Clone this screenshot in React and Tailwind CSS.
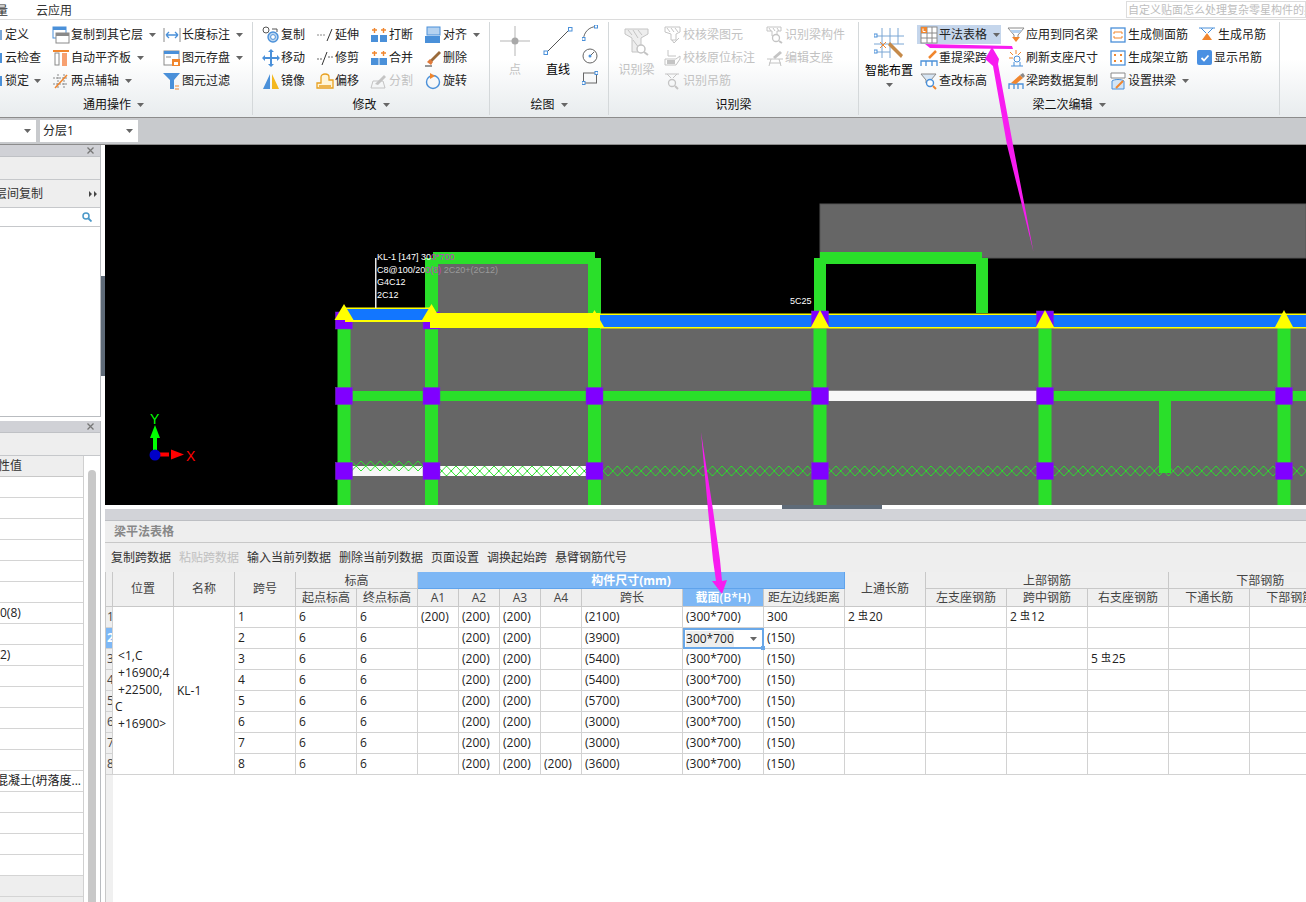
import React from "react";

const B = "#4a90d9";
const O = "#f0862e";
const G = "#8a8a8a";
const L = "#c4c4c4";

const icons = {
  copyLayer: <><rect x="1" y="1" width="13" height="11" fill="#fff" stroke={B} /><rect x="1" y="1" width="13" height="3" fill={B} /><rect x="4" y="7" width="13" height="10" fill="#fff" stroke={G} /><rect x="4" y="7" width="13" height="3" fill={G} /></>,
  autoAlign: <><rect x="1" y="1" width="16" height="2" fill={O} /><rect x="3" y="4" width="4" height="12" fill="#fff" stroke={G} /><rect x="10" y="4" width="5" height="13" fill="#f7a070" /></>,
  twoPoint: <><path d="M1 6h15M1 12h15M6 2v15M12 2v15" stroke={G} strokeDasharray="2 1" fill="none" /><path d="M3 16L15 3" stroke={O} strokeWidth="1.5" /></>,
  dimension: <><path d="M1 2v14M17 2v14" stroke={G} /><path d="M3 9h12M3 9l3-3M3 9l3 3M15 9l-3-3M15 9l-3 3" stroke={B} strokeWidth="1.3" fill="none" /></>,
  saveEl: <><rect x="1" y="2" width="15" height="14" fill="#fff" stroke={G} /><rect x="1" y="2" width="15" height="3" fill={B} /><rect x="3" y="7" width="5" height="2" fill={L} /><rect x="9" y="10" width="8" height="7" fill={O} /><rect x="11" y="13" width="4" height="3" fill="#fff" /></>,
  filter: <><path d="M0 1h17l-6 7v9H7V8z" fill={B} /><path d="M12 14h4M12 17h4" stroke={O} /></>,
  copy: <><circle cx="4" cy="4" r="3" fill="#fff" stroke="#555" /><circle cx="11" cy="11" r="5" fill="#bcd6f0" stroke={B} strokeWidth="1.4" /><circle cx="11" cy="11" r="2.4" fill="#fff" stroke={B} /><path d="M10 3h5v3" stroke="#555" fill="none" /></>,
  extend: <><path d="M1 9h9" stroke={G} strokeDasharray="2 1" fill="none" /><path d="M11 15L16 3" stroke="#333" /></>,
  breakEl: <><rect x="1" y="9" width="7" height="7" fill={B} /><rect x="10" y="9" width="7" height="7" fill={B} /><path d="M2 4h5M4.5 2v5M11 4h5M13.5 2v5" stroke={O} strokeWidth="1.4" /></>,
  align: <><rect x="3" y="1" width="13" height="8" fill="#b5d2f0" stroke={B} /><rect x="1" y="10" width="15" height="7" fill={B} /></>,
  move: <path d="M9 0l3 3h-2v5h5V6l3 3-3 3v-2h-5v5h2l-3 3-3-3h2v-5H3v2L0 9l3-3v2h5V3H6z" fill={B} />,
  trim: <><path d="M1 10h5M12 8h5" stroke="#666" strokeDasharray="2 1" /><path d="M6 16L11 3" stroke="#333" /></>,
  merge: <><rect x="1" y="9" width="16" height="7" fill={B} /><path d="M9 9v7" stroke="#fff" /><path d="M2 4h5M4.5 2v5M11 4h5M13.5 2v5" stroke={O} strokeWidth="1.4" /></>,
  del: <><path d="M6 11L15 2l2 2-9 9z" fill="#9a6a3a" /><path d="M3 13l3-3 3 3-2 3z" fill="#e07a3a" /><path d="M1 17h7" stroke="#333" /></>,
  mirror: <><path d="M8 2v15H1z" fill={B} /><path d="M10 2v15h7z" fill="#f4b81e" /></>,
  offset: <path d="M1 16v-5h4V5c0-4 8-4 8 0v3h4v8zM3 14h12" fill="#fff5d8" stroke="#e8a020" strokeWidth="1.3" />,
  split: <><path d="M1 16h14l-2-7H3z" fill="none" stroke={L} /><path d="M5 12L14 3l2 2-8 8z" fill={L} /></>,
  rotate: <><circle cx="9" cy="10" r="6.5" fill="none" stroke={B} strokeWidth="1.4" /><path d="M6 1l5 3-5 3z" fill={O} /></>,
  genSide: <><rect x="2" y="2" width="14" height="14" fill="#fff" stroke={B} strokeWidth="1.3" /><path d="M5 6h8M5 12h8M5 6v2M13 6v2M5 12v-2M13 12v-2" stroke={O} fill="none" /></>,
  genStand: <><rect x="2" y="2" width="14" height="14" fill="#fff" stroke={B} strokeWidth="1.3" /><rect x="5" y="5" width="2" height="2" fill={O} /><rect x="11" y="5" width="2" height="2" fill={O} /><rect x="5" y="11" width="2" height="2" fill={O} /><rect x="11" y="11" width="2" height="2" fill={O} /></>,
  hang: <><path d="M1 2h16M3 2l5 5M15 2l-5 5" stroke={B} fill="none" /><path d="M9 7l5 7H4z" fill={O} /></>,
  table: <><rect x="1" y="1" width="16" height="16" fill="#fff" stroke={G} /><path d="M1 7h16M1 12h16M7 1v16M12 1v16" stroke={G} /><rect x="1" y="1" width="6" height="6" fill={O} /><path d="M3 2.5v3h2.5" stroke="#fff" fill="none" /></>,
  applySame: <><path d="M1 2h16l-6 7v3H7V9z" fill="#fff" stroke={G} /><path d="M3 4h12l-3 3H6z" fill="#b5d2f0" /><path d="M5 11h8l-4 5z" fill={O} /></>,
  refresh: <><path d="M9 1v4M2 9h4M3 3l3 3M14 3l-3 3" stroke={O} /><circle cx="10" cy="10" r="3" fill="#fff" stroke={B} /><path d="M4 17h12M7 13v4M13 13v4" stroke={B} /></>,
  retrieve: <><path d="M1 17v-5h16v5M1 12h16M6 12v5M12 12v5" stroke={B} fill="none" strokeWidth="1.3" /><path d="M9 9l7-7" stroke={O} strokeWidth="2.5" /></>,
  checkElev: <><path d="M1 2h15l-5 6v3H6V8z" fill="#d8e6f4" stroke={G} /><circle cx="10" cy="11" r="3.5" fill="#fff" stroke={B} strokeWidth="1.4" /><path d="M13 14l3 3" stroke={O} strokeWidth="2" /></>,
  spanCopy: <><path d="M2 17v-5h14v5M7 12v5M11 12v5" stroke={B} fill="none" strokeWidth="1.3" /><path d="M4 11L13 3l3 3-7 6z" fill={O} /><path d="M13 3l3-2 2 3-2 2z" fill={G} /></>,
  arch: <><path d="M2 1h14v5H2z" fill="#fff" stroke={G} /><path d="M3 17V9c2-2 10-2 12 0v8z" fill="#d3e5f6" stroke={B} /><path d="M7 16L14 9" stroke={O} strokeWidth="2" /></>,
  checkBeam: <><path d="M1 1h15v5l-4 2v6H7V8L1 6z" fill="none" stroke={L} /><path d="M3 2l3 4M7 2l3 4M11 2l3 4" stroke={L} /><path d="M8 14l2 3 5-5" stroke={L} fill="none" /></>,
  checkOrig: <><path d="M4 1v6h8M1 10h11l4-3v3l-4 6H1z" fill="none" stroke={L} /><path d="M3 11h8v4H3z" fill={L} /></>,
  hangGray: <><path d="M1 2h14M3 2l4 4M13 2l-4 4" stroke={L} fill="none" /><circle cx="8" cy="11" r="3.5" fill="none" stroke={L} strokeWidth="1.3" /><path d="M11 14l3 3" stroke={L} strokeWidth="2" /></>,
  beamComp: <><path d="M1 1h14v4h-4v5H6V5H1z" fill="none" stroke={L} /><path d="M3 2l2 3M7 2l2 3M11 2l2 3" stroke={L} /><circle cx="10" cy="12" r="3.5" fill="#fff" stroke={L} strokeWidth="1.3" /><path d="M13 15l3 2" stroke={L} strokeWidth="2" /></>,
  editSupport: <><path d="M1 10h16M3 14h12M5 10l-2 7M13 10l2 7" stroke={L} fill="none" /><path d="M7 8l7-6 2 2-7 6z" fill={L} /></>,
};

function Ico({ name, size = 18 }) {
  return (
    <svg viewBox="0 0 18 18" className="shrink-0" width={size} height={size}>
      {icons[name]}
    </svg>
  );
}

function Caret({ className = "" }) {
  return (
    <svg viewBox="0 0 7 4" className={`w-[7px] h-[4px] shrink-0 ${className}`}>
      <path d="M0 0h7L3.5 4z" fill="#666" />
    </svg>
  );
}

function Item({ icon, label, caret, off, active }) {
  return (
    <div className="h-[23px] flex items-center">
      <div className={`flex items-center gap-[1px] h-[19px] ${active ? "bg-[#c5d6ec] w-[84px] pl-[3px] -ml-[3px]" : ""}`}>
        <Ico name={icon} />
        <span className={`whitespace-nowrap ${off ? "text-[#c2c2c2]" : "text-[#222]"}`}>{label}</span>
        {caret && <Caret className="ml-[5px]" />}
      </div>
    </div>
  );
}

function Group({ width, label, caret, start, children }) {
  return (
    <>
      <section className="flex flex-col shrink-0" style={{ width }}>
        <div className="flex h-[72px] pt-[3px] box-border">{children}</div>
        <div className={`flex h-[24px] pt-[2px] box-border items-center gap-[6px] text-[#111] ${start ? "justify-start pl-[83px]" : "justify-center"}`}>
          {label}
          {caret && <Caret />}
        </div>
      </section>
      <div className="w-px my-[2px] bg-[#d4d8da] shrink-0" />
    </>
  );
}

function Col({ w, className = "", children }) {
  return (
    <div className={`flex flex-col shrink-0 ${className}`} style={{ width: w }}>
      {children}
    </div>
  );
}

function Sliver({ label, caret, color }) {
  return (
    <div className="h-[23px] flex items-center gap-[3px]">
      <span className={`w-[2px] h-[10px] ${color}`} />
      <span className="text-[#222]">{label}</span>
      {caret && <Caret className="ml-[2px]" />}
    </div>
  );
}

function Ribbon() {
  return (
    <div className="h-[98px] box-border border-b border-[#8c8c8c] flex bg-linear-to-b from-white from-40% to-[#e8ecee] overflow-hidden">
      <Group width={252} label="通用操作" caret start>
        <Col w={52}>
          <Sliver label="定义" color="bg-[#7aa7d8]" />
          <Sliver label="云检查" color="bg-[#4a90d9]" />
          <Sliver label="锁定" caret color="bg-[#4a90d9]" />
        </Col>
        <Col w={111}>
          <Item icon="copyLayer" label="复制到其它层" caret />
          <Item icon="autoAlign" label="自动平齐板" caret />
          <Item icon="twoPoint" label="两点辅轴" caret />
        </Col>
        <Col w={89}>
          <Item icon="dimension" label="长度标注" caret />
          <Item icon="saveEl" label="图元存盘" caret />
          <Item icon="filter" label="图元过滤" />
        </Col>
      </Group>
      <Group width={236} label="修改" caret>
        <Col w={63} className="pl-[9px]">
          <Item icon="copy" label="复制" />
          <Item icon="move" label="移动" />
          <Item icon="mirror" label="镜像" />
        </Col>
        <Col w={54}>
          <Item icon="extend" label="延伸" />
          <Item icon="trim" label="修剪" />
          <Item icon="offset" label="偏移" />
        </Col>
        <Col w={54}>
          <Item icon="breakEl" label="打断" />
          <Item icon="merge" label="合并" />
          <Item icon="split" label="分割" off />
        </Col>
        <Col w={60}>
          <Item icon="align" label="对齐" caret />
          <Item icon="del" label="删除" />
          <Item icon="rotate" label="旋转" />
        </Col>
      </Group>
      <Group width={118} label="绘图" caret>
        <Col w={50} className="items-center">
          <svg viewBox="0 0 30 30" className="w-[30px] h-[30px] mt-[3px] mb-[4px]">
            <path d="M0 15h30M15 0v30" stroke="#b5b5b5" />
            <circle cx="15" cy="15" r="3.5" fill="#a8a8a8" />
          </svg>
          <span className="text-[#c2c2c2] h-[20px] leading-[20px]">点</span>
        </Col>
        <Col w={36} className="items-center">
          <svg viewBox="0 0 30 30" className="w-[30px] h-[30px] mt-[3px] mb-[4px]">
            <path d="M3 27L27 3" stroke="#555" />
            <rect x="1" y="25" width="3.5" height="3.5" fill="#fff" stroke={B} />
            <rect x="25.5" y="1.5" width="3.5" height="3.5" fill="#fff" stroke={B} />
          </svg>
          <span className="text-black h-[20px] leading-[20px]">直线</span>
        </Col>
        <Col w={32} className="pl-[6px]">
          <svg viewBox="0 0 16 16" className="w-4 h-4 mt-[2px] mb-[7px]">
            <path d="M1.5 14C2 7 7 2 14 1.5" stroke="#666" fill="none" />
            <rect x="0" y="12.5" width="3" height="3" fill="#fff" stroke={B} />
            <rect x="12.5" y="0" width="3" height="3" fill="#fff" stroke={B} />
          </svg>
          <svg viewBox="0 0 16 16" className="w-4 h-4 mb-[7px]">
            <circle cx="8" cy="8" r="7" fill="none" stroke="#666" />
            <path d="M8 8l4-4" stroke="#666" />
            <circle cx="8" cy="8" r="1.5" fill={B} />
          </svg>
          <svg viewBox="0 0 16 14" className="w-4 h-[14px]">
            <rect x="1.5" y="2" width="13" height="10" fill="none" stroke="#666" />
            <rect x="0" y="10.5" width="3" height="3" fill="#fff" stroke={B} />
            <rect x="13" y="0.5" width="3" height="3" fill="#fff" stroke={B} />
          </svg>
        </Col>
      </Group>
      <Group width={249} label="识别梁">
        <Col w={55} className="items-center">
          <svg viewBox="0 0 26 28" className="w-[26px] h-[28px] mt-[5px] mb-[4px]">
            <path d="M1 1h23v5l-7 4v14H8V10L1 6z" fill="#eee" stroke={L} />
            <path d="M4 2l4 5M9 2l5 8M14 2l4 5M9 12l6 8" stroke={L} />
            <circle cx="17" cy="21" r="4" fill="#fff" stroke={L} strokeWidth="1.5" />
            <path d="M20 24l4 3" stroke={L} strokeWidth="2" />
          </svg>
          <span className="text-[#c2c2c2] h-[20px] leading-[20px]">识别梁</span>
        </Col>
        <Col w={102}>
          <Item icon="checkBeam" label="校核梁图元" off />
          <Item icon="checkOrig" label="校核原位标注" off />
          <Item icon="hangGray" label="识别吊筋" off />
        </Col>
        <Col w={92}>
          <Item icon="beamComp" label="识别梁构件" off />
          <Item icon="editSupport" label="编辑支座" off />
        </Col>
      </Group>
      <Group width={420} label="梁二次编辑" caret>
        <Col w={58} className="items-center pl-[2px]">
          <svg viewBox="0 0 30 32" className="w-[30px] h-[32px] mt-[5px]">
            <path d="M0 8h30M0 16h30M0 24h16M8 0v30M16 0v30M24 0v16" stroke="#7ba6d4" />
            <path d="M6 14l6 6M12 14l-6 6" stroke={O} />
            <path d="M16 14l13 13-2 3-13-13z" fill="#c58a4a" />
            <rect x="0" y="6" width="3" height="3" fill="#fff" stroke={B} />
            <rect x="0" y="22" width="3" height="3" fill="#fff" stroke={B} />
          </svg>
          <span className="text-black h-[18px] leading-[18px] mt-[2px]">智能布置</span>
          <Caret className="mt-[3px]" />
        </Col>
        <Col w={90} className="pl-[3px]">
          <Item icon="table" label="平法表格" caret active />
          <Item icon="retrieve" label="重提梁跨" />
          <Item icon="checkElev" label="查改标高" />
        </Col>
        <Col w={103}>
          <Item icon="applySame" label="应用到同名梁" />
          <Item icon="refresh" label="刷新支座尺寸" />
          <Item icon="spanCopy" label="梁跨数据复制" />
        </Col>
        <Col w={87}>
          <div className="-ml-px">
            <Item icon="genSide" label="生成侧面筋" />
            <Item icon="genStand" label="生成架立筋" />
            <Item icon="arch" label="设置拱梁" caret />
          </div>
        </Col>
        <Col w={82}>
          <div className="h-[23px] flex items-center gap-[2px] pl-px">
            <Ico name="hang" />
            <span className="text-[#222]">生成吊筋</span>
          </div>
          <div className="h-[23px] flex items-center gap-[2px]">
            <span className="w-[15px] h-[15px] rounded-[2px] bg-[#4a90e2] flex items-center justify-center">
              <svg viewBox="0 0 10 10" className="w-[10px] h-[10px]">
                <path d="M1.5 5l2.5 2.5L8.5 2.5" stroke="#fff" strokeWidth="1.8" fill="none" />
              </svg>
            </span>
            <span className="text-[#222]">显示吊筋</span>
          </div>
        </Col>
      </Group>
    </div>
  );
}

function Combo({ w, text }) {
  return (
    <div className="h-[22px] bg-white flex items-center justify-between pl-[3px] pr-[5px] text-[#222] shrink-0" style={{ width: w }}>
      <span>{text}</span>
      <Caret className="w-[6px]" />
    </div>
  );
}

function PanelHead() {
  return (
    <div className="h-[12px] shrink-0 box-border bg-[#d0d1d6] border-b border-[#bfc1c5] flex items-center justify-end pr-[6px] text-[#777]">
      <svg viewBox="0 0 7 7" className="w-[7px] h-[7px]">
        <path d="M0.5 0.5l6 6M6.5 0.5l-6 6" stroke="#777" strokeWidth="1.3" />
      </svg>
    </div>
  );
}

const props = Array.from({ length: 21 }, () => "");
props[6] = "0(8)";
props[8] = "2)";
props[14] = "混凝土(坍落度...";

function Sidebar() {
  return (
    <aside className="w-[105px] shrink-0 h-full bg-white relative overflow-hidden">
      <div className="w-[101px] h-[272px] box-border border-r border-b border-[#b9bcc0] flex flex-col">
        <PanelHead />
        <div className="h-[23px] box-border bg-[#eeeeee] border-b border-[#c6c8cb]" />
        <div className="h-[28px] box-border bg-[#eeeeee] border-b border-[#c6c8cb] flex items-center justify-between pr-[3px] text-[#333]">
          <span className="-ml-[5px]">层间复制</span>
          <svg viewBox="0 0 8 6" className="w-2 h-[6px]">
            <path d="M0 0l3 3-3 3zM5 0l3 3-3 3z" fill="#444" />
          </svg>
        </div>
        <div className="h-[19px] box-border border-b border-[#c6c8cb] flex items-center justify-end pr-[8px]">
          <svg viewBox="0 0 10 10" className="w-[10px] h-[10px]">
            <circle cx="4" cy="4" r="3" fill="none" stroke="#4a98c8" strokeWidth="1.5" />
            <path d="M6.5 6.5l3 3" stroke="#4a98c8" strokeWidth="1.8" />
          </svg>
        </div>
      </div>
      <div className="mt-[4px] w-[101px] border-r border-[#b9bcc0] flex flex-col h-[482px] overflow-hidden">
        <PanelHead />
        <div className="h-[23px] shrink-0 box-border bg-[#eeeeee] border-b border-[#c6c8cb]" />
        <div className="flex flex-1 min-h-0">
          <div className="w-[84px] shrink-0 border-r border-[#d0d0d0] overflow-hidden">
            <div className="h-[21px] box-border bg-[#eeeeee] border-b border-[#c8c8c8] flex items-center text-[#333]">
              <span className="-ml-[14px]">属性值</span>
            </div>
            {props.map((p, i) => (
              <div
                key={i}
                className={`h-[21px] box-border border-b border-[#d4d4d4] flex items-center whitespace-nowrap text-[#222] ${i >= 19 ? "bg-[#eeeeee]" : ""} ${i === 14 ? "-ml-[4px]" : ""}`}
              >
                {p}
              </div>
            ))}
          </div>
          <div className="flex-1 flex justify-center pt-[14px] bg-white">
            <div className="w-[8px] h-[500px] rounded-t-[4px] bg-[#c8c8c8]" />
          </div>
        </div>
      </div>
      <div className="absolute left-[101px] top-[131px] w-[4px] h-[100px] bg-[#5f6b78]" />
    </aside>
  );
}

const columns = [344, 431.5, 594.5, 820, 1045, 1284];
const green = "#2adf2a";

function Purple({ cx, cy }) {
  return <rect x={cx - 8.5} y={cy - 8.5} width="17" height="17" fill="#8000ff" stroke="#7a30c8" strokeWidth="0.5" />;
}

function Tri({ cx, tip, base }) {
  return <path d={`M${cx} ${tip}L${cx + 9.5} ${base}H${cx - 9.5}z`} fill="#ffff00" />;
}

function Canvas() {
  const txt = { fontFamily: "'Liberation Sans',sans-serif", fontSize: 9 };
  return (
    <svg viewBox="105 145 1201 360" className="block w-[1201px] h-[360px] bg-black">
      <defs>
        <pattern id="xh" width="9.5" height="10" patternUnits="userSpaceOnUse" x="0" y="466">
          <path d="M0 0L9.5 10M9.5 0L0 10" stroke={green} strokeWidth="1" fill="none" shapeRendering="crispEdges" />
        </pattern>
        <pattern id="xh2" width="9.5" height="10" patternUnits="userSpaceOnUse" x="0" y="461">
          <path d="M0 0L9.5 10M9.5 0L0 10" stroke={green} strokeWidth="1" fill="none" shapeRendering="crispEdges" />
        </pattern>
      </defs>
      <rect x="820" y="204" width="486" height="54" fill="#666" stroke="#555" />
      <rect x="438" y="264" width="150" height="50" fill="#666" />
      <rect x="338" y="320" width="968" height="185" fill="#666" />

      {/* upper arches */}
      <path d="M425 258h8v-6h162v6h6v57h-13v-51H438v51h-13z" fill={green} />
      <path d="M814 258h6v-6h162v6h6v55h-12v-49H826v51h-12z" fill={green} />

      {/* lower hatch beam */}
      <rect x="351" y="466" width="74" height="10" fill="#f7f7f7" />
      <rect x="351" y="461" width="74" height="10" fill="url(#xh2)" />
      <rect x="438" y="466" width="148" height="10" fill="#fff" />
      <rect x="438" y="466" width="148" height="10" fill="url(#xh)" />
      <rect x="603" y="466" width="703" height="10" fill="url(#xh)" />

      {/* middle beam */}
      <rect x="338" y="391" width="968" height="10" fill={green} />
      <rect x="826" y="391" width="213" height="10" fill="#f7f7f7" />
      <rect x="826" y="390" width="213" height="1" fill="#8a8a8a" />
      <rect x="1159" y="401" width="12" height="72" fill={green} />

      {columns.map((c) => (
        <rect key={c} x={c - 6.5} y="322" width="13" height="183" fill={green} />
      ))}

      {/* top beam */}
      <rect x="600" y="313.5" width="706" height="15" fill="#ffff00" />
      <rect x="600" y="315" width="706" height="12" fill="#1276ff" />
      <Purple cx={344} cy={320.5} />
      <Purple cx={431.5} cy={320.5} />
      <rect x="345" y="307.5" width="86" height="14.5" fill="#ffff00" />
      <rect x="347" y="309" width="83" height="11" fill="#1276ff" />
      <rect x="430" y="313" width="170" height="15" fill="#ffff00" />
      <Purple cx={820} cy={319.5} />
      <Purple cx={1045} cy={319.5} />
      <Tri cx={344} tip={304} base={320} />
      <Tri cx={431.5} tip={304} base={320} />
      <Tri cx={594.5} tip={310} base={327} />
      <Tri cx={820} tip={310} base={328} />
      <Tri cx={1045} tip={310} base={328} />
      <Tri cx={1284} tip={310} base={328} />

      {columns.map((c) => (
        <g key={c}>
          <Purple cx={c} cy={396} />
          <Purple cx={c} cy={471} />
        </g>
      ))}

      {/* labels */}
      <rect x="375" y="258" width="1.5" height="50" fill="#e8e8e8" />
      <text x="377" y="260" fill="#fff" style={txt}>KL-1 [147] 30<tspan fill="#c040c0">0*700</tspan></text>
      <text x="377" y="273" fill="#fff" style={txt}>C8@100/20<tspan fill="#c040c0">0(8)</tspan><tspan fill="#9a9a9a"> 2C20+(2C12)</tspan></text>
      <text x="377" y="285" fill="#fff" style={txt}>G4C12</text>
      <text x="377" y="298" fill="#fff" style={txt}>2C12</text>
      <text x="790" y="304" fill="#fff" style={txt}>5C25</text>

      {/* axis */}
      <rect x="153" y="438" width="4" height="17" fill="#00ff00" />
      <path d="M155 425l5 13h-10z" fill="#00ff00" />
      <rect x="155" y="452.5" width="14" height="4" fill="#ff0000" />
      <path d="M184 454.5l-13 5v-10z" fill="#ff0000" />
      <circle cx="155" cy="455" r="5.5" fill="#0000c8" />
      <text x="150" y="424" fill="#00ff00" style={{ ...txt, fontSize: 14 }}>Y</text>
      <text x="186" y="461" fill="#ff0000" style={{ ...txt, fontSize: 14 }}>X</text>
    </svg>
  );
}

const cols = [7, 61, 61, 61, 61, 61, 41, 41, 41, 41, 101, 81, 81, 81, 81, 81, 81, 81, 81];

const rows = [
  { a1: "(200)", len: "(2100)", dist: "300", top: true, mid: true },
  { len: "(3900)", dist: "(150)", editing: true },
  { len: "(5400)", dist: "(150)", right: true },
  { len: "(5400)", dist: "(150)" },
  { len: "(5700)", dist: "(150)" },
  { len: "(3000)", dist: "(150)" },
  { len: "(3000)", dist: "(150)" },
  { a4: "(200)", len: "(3600)", dist: "(150)" },
];

const hd = "bg-[#efefef] border-r border-b border-[#c8c8c8] text-center font-normal text-[#444] p-0 overflow-hidden whitespace-nowrap";
const td = "border-r border-b border-[#d2d2d2] pl-[3px] pr-0 py-0 h-[21px] text-[#222] whitespace-nowrap overflow-hidden text-left";

function Rebar({ a, b }) {
  return (
    <span>
      {a}
      <span className="text-[10px] relative -top-[2px] ml-[3px] mr-px">虫</span>
      {b}
    </span>
  );
}

function BeamTable() {
  return (
    <table className="table-fixed border-separate border-spacing-0 w-[1225px] shrink-0">
      <colgroup>
        {cols.map((w, i) => (
          <col key={i} style={{ width: w }} />
        ))}
      </colgroup>
      <thead>
        <tr className="h-[17px]">
          <th rowSpan={2} className={hd} />
          <th rowSpan={2} className={hd}>位置</th>
          <th rowSpan={2} className={hd}>名称</th>
          <th rowSpan={2} className={hd}>跨号</th>
          <th colSpan={2} className={`${hd} leading-[15px] pt-px`}>标高</th>
          <th colSpan={7} className="bg-[#7db7f5] border-r border-b border-[#5fa3ec] text-center font-bold text-white p-0 leading-[15px] pt-px">构件尺寸(mm)</th>
          <th rowSpan={2} className={hd}>上通长筋</th>
          <th colSpan={3} className={`${hd} leading-[15px] pt-px`}>上部钢筋</th>
          <th colSpan={2} className={`${hd} text-left pl-[67px] leading-[15px] pt-px`}>下部钢筋</th>
        </tr>
        <tr className="h-[18px]">
          <th className={hd}>起点标高</th>
          <th className={hd}>终点标高</th>
          <th className={hd}>A1</th>
          <th className={hd}>A2</th>
          <th className={hd}>A3</th>
          <th className={hd}>A4</th>
          <th className={hd}>跨长</th>
          <th className="bg-[#7db7f5] border-r border-b border-[#c8c8c8] text-center font-semibold text-white p-0">截面(B*H)</th>
          <th className={hd}>距左边线距离</th>
          <th className={hd}>左支座钢筋</th>
          <th className={hd}>跨中钢筋</th>
          <th className={hd}>右支座钢筋</th>
          <th className={hd}>下通长筋</th>
          <th className={hd}>下部钢筋</th>
        </tr>
      </thead>
      <tbody>
        {rows.map((r, i) => (
          <tr key={i}>
            <td className={`border-r border-b border-[#d2d2d2] p-0 pl-px overflow-hidden ${r.editing ? "bg-[#7db7f5] text-white font-bold" : "bg-[#efefef] text-[#444]"}`}>{i + 1}</td>
            {i === 0 && (
              <>
                <td rowSpan={8} className="border-r border-b border-[#d2d2d2] p-0 pl-[2px] text-[#222] leading-[17px] align-middle">
                  <div className="pb-[3px]">
                    &nbsp;&lt;1,C<br />&nbsp;+16900;4<br />&nbsp;+22500,<br />C<br />&nbsp;+16900&gt;
                  </div>
                </td>
                <td rowSpan={8} className="border-r border-b border-[#d2d2d2] p-0 pl-[3px] text-[#222] align-middle">KL-1</td>
              </>
            )}
            <td className={td}>{i + 1}</td>
            <td className={td}>6</td>
            <td className={td}>6</td>
            <td className={td}>{r.a1}</td>
            <td className={td}>(200)</td>
            <td className={td}>(200)</td>
            <td className={td}>{r.a4}</td>
            <td className={td}>{r.len}</td>
            {r.editing ? (
              <td className="relative border-2 border-[#6aa8e8] p-0 pl-[1px] h-[21px] text-[#222]">
                <div className="flex items-center justify-between pr-[5px]">
                  <span className="bg-[#eeeeee]">300*700</span>
                  <Caret className="w-[6px]" />
                </div>
                <span className="absolute -right-[3px] -bottom-[3px] w-[4px] h-[4px] bg-[#6aa8e8]" />
              </td>
            ) : (
              <td className={td}>(300*700)</td>
            )}
            <td className={td}>{r.dist}</td>
            <td className={td}>{r.top && <Rebar a="2" b="20" />}</td>
            <td className={td} />
            <td className={td}>{r.mid && <Rebar a="2" b="12" />}</td>
            <td className={td}>{r.right && <Rebar a="5" b="25" />}</td>
            <td className={td} />
            <td className={td} />
          </tr>
        ))}
      </tbody>
    </table>
  );
}

function TablePanel() {
  const tools = ["复制跨数据", "粘贴跨数据", "输入当前列数据", "删除当前列数据", "页面设置", "调换起始跨", "悬臂钢筋代号"];
  return (
    <div className="flex-1 min-h-0 flex flex-col overflow-hidden">
      <div className="h-[4px] bg-white flex shrink-0">
        <div className="ml-[677px] w-[100px] h-full bg-[#5f6b78]" />
      </div>
      <div className="h-[12px] bg-[#d2d3d8] border-b border-[#bdbfc3] box-border shrink-0" />
      <div className="h-[22px] box-border bg-[#eeeeee] border-b border-[#c8c8c8] shrink-0 flex items-center pl-[9px] font-semibold text-[#888]">梁平法表格</div>
      <div className="h-[29px] box-border bg-[#eeeeee] shrink-0 flex items-center gap-2 pl-[6px] text-[#333]">
        {tools.map((t, i) => (
          <span key={t} className={i === 1 ? "text-[#c0c0c0]" : ""}>{t}</span>
        ))}
      </div>
      <div className="flex-1 min-h-0 flex flex-col border-l border-[#c8c8c8] overflow-hidden">
        <BeamTable />
        <div className="flex-1 w-[7px] bg-[#f0f0f0]" />
      </div>
    </div>
  );
}

export default function App() {
  return (
    <div className="relative w-[1306px] h-[902px] overflow-hidden bg-white text-[12px] leading-[16px] font-['Open_Sans','Noto_Sans_CJK_SC',sans-serif]">
      <div className="h-[20px] box-border border-b border-[#dcdcdc] bg-white flex items-center relative text-[#333]">
        <span className="-ml-[4px] w-[40px] pt-[2px]">量</span>
        <span className="pt-[2px]">云应用</span>
        <div className="ml-auto w-[180px] h-[17px] border border-[#dddddd] overflow-hidden whitespace-nowrap text-[#bdbdbd] text-[11px] pl-[1px] leading-[15px]">自定义贴面怎么处理复杂零星构件的办</div>
      </div>
      <Ribbon />
      <div className="h-[27px] box-border bg-[#c8cacd] border-b border-[#8c8c8c] flex items-center gap-[4px]">
        <Combo w={36} text="" />
        <Combo w={98} text="分层1" />
      </div>
      <div className="flex h-[757px]">
        <Sidebar />
        <div className="flex-1 min-w-0 flex flex-col">
          <Canvas />
          <TablePanel />
        </div>
      </div>

      {/* annotation strokes drawn over the screenshot */}
      <svg viewBox="0 0 1306 902" className="absolute inset-0 w-[1306px] h-[902px] pointer-events-none">
        <path d="M925 44L1012 46L1013 49L930 48z" fill="#f81cf0" />
        <path d="M992 47L999 59L998 64L1013 145L1033.5 252L1007 145L993 66L985 59z" fill="#f81cf0" />
        <path d="M701 432L713 510L720 560L722 581L727 580L722 594L712 581L716 581L713 560L708 510z" fill="#f81cf0" />
      </svg>
    </div>
  );
}
